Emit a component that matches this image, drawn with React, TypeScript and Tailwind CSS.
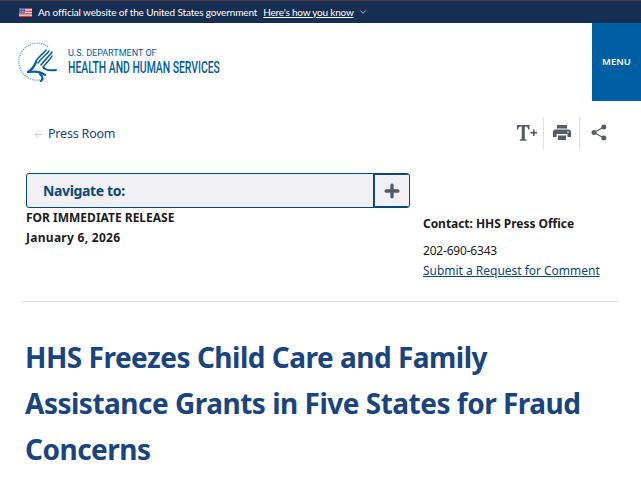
import { ChevronDown, ArrowLeft, Plus } from "lucide-react";

const UsFlag = () => (
  <svg width="13" height="9" viewBox="0 0 13 9" className="shrink-0">
    <rect width="13" height="9" fill="#f4f4f4" />
    <rect y="0" width="13" height="1.3" fill="#d83933" />
    <rect y="2.6" width="13" height="1.3" fill="#d83933" />
    <rect y="5.2" width="13" height="1.3" fill="#d83933" />
    <rect y="7.7" width="13" height="1.3" fill="#d83933" />
    <rect width="6" height="4.8" fill="#5a5fa8" />
    <circle cx="1.5" cy="1.3" r="0.4" fill="#fff" />
    <circle cx="3.2" cy="1.3" r="0.4" fill="#fff" />
    <circle cx="4.8" cy="1.3" r="0.4" fill="#fff" />
    <circle cx="1.5" cy="3.3" r="0.4" fill="#fff" />
    <circle cx="3.2" cy="3.3" r="0.4" fill="#fff" />
    <circle cx="4.8" cy="3.3" r="0.4" fill="#fff" />
  </svg>
);

// hhs eagle with the dotted seal ring round it
const HhsSeal = () => (
  <svg width="40" height="40" viewBox="0 0 40 40" className="shrink-0">
    <path d="M30 4.500 A18.500 18.500 0 1 0 27 36.500" fill="none" stroke="#6fa3cc" strokeWidth="1.400" strokeDasharray="1.200 1" />
    <g fill="none" stroke="#005ea2" strokeLinecap="round">
      <path d="M31 9 C28 13 24 15 20 21" strokeWidth="1.500" />
      <path d="M34 10 C31 15 27 17 23 23" strokeWidth="1.500" />
      <path d="M34 14 C32 18 29 20 26 24" strokeWidth="1.500" />
      <path d="M28 8 C25 12 21 14 18 19" strokeWidth="1.500" />
      <path d="M18 20 C16 25 14 28 10 30" strokeWidth="2.200" />
      <path d="M10 30 C17 29 23 29 27 33" strokeWidth="2.200" />
      <path d="M25 25 C27 28 31 29 38 28" strokeWidth="2" />
      <path d="M22 32 C25 34 25 37 23 39" strokeWidth="2.200" />
    </g>
  </svg>
);

const TextSizeIcon = () => (
  <svg width="22" height="18" viewBox="0 0 22 18" fill="#565c65">
    <path d="M1 1h12.500v4.600h-1.200c-.3-2-.9-3-2.700-3H8.800v11.600c0 1 .5 1.300 1.900 1.400v1.100H3.800v-1.100c1.400-.1 1.900-.4 1.900-1.400V2.600H4.900c-1.800 0-2.400 1-2.700 3H1z" />
    <rect x="14.500" y="8" width="6.500" height="1.600" />
    <rect x="17" y="5.500" width="1.600" height="6.500" />
  </svg>
);

const PrintIcon = () => (
  <svg width="18" height="15" viewBox="0 0 18 15" fill="#565c65">
    <path d="M4 0h10v3.500H4z" />
    <path d="M2.500 4.500h13A2.500 2.500 0 0 1 18 7v5h-3.500V9h-11v3H0V7a2.500 2.500 0 0 1 2.500-2.500z" />
    <path d="M5 10.500h8V15H5z" />
    <circle cx="15" cy="7" r="0.800" fill="#fff" />
  </svg>
);

const ShareIcon = () => (
  <svg width="16" height="17" viewBox="0 0 16 17" fill="#565c65">
    <circle cx="12.800" cy="3" r="2.500" />
    <circle cx="3" cy="8.500" r="2.500" />
    <circle cx="12.800" cy="14" r="2.500" />
    <path d="M3 8.500 12.800 3M3 8.500l9.800 5.500" stroke="#565c65" strokeWidth="1.300" fill="none" />
  </svg>
);

export default function App() {
  return (
    <div className="h-[488px] w-[641px] overflow-hidden bg-white font-['Noto_Sans',sans-serif] text-[#1b1b1b]">
      {/* Gov banner */}
      <div className="flex h-[23px] items-center border-t border-[#4a3b3b] bg-[#162e51] pl-[19px] font-['Lato',sans-serif] text-[10px] text-white">
        <UsFlag />
        <span className="ml-[6px] tracking-[-0.14px]">An official website of the United States government</span>
        <span className="ml-[6px] tracking-[-0.2px] underline">Here's how you know</span>
        <ChevronDown size={10} strokeWidth={1.5} className="ml-[4px]" />
      </div>

      {/* Header */}
      <div className="flex h-[78px] items-start justify-between">
        <div className="flex items-center pl-[18px] pt-[19px]">
          <HhsSeal />
          <div className="ml-[10px] flex flex-col font-['Roboto',sans-serif] text-[#005ea2]">
            <span className="text-[9px] leading-[11px]">U.S. DEPARTMENT OF</span>
            <span className="origin-left scale-x-[0.65] whitespace-nowrap text-[16px] font-medium leading-[17px]">HEALTH AND HUMAN SERVICES</span>
          </div>
        </div>
        <div className="flex h-[78px] w-[49px] items-center justify-center bg-[#005ea2] text-[9.500px] font-semibold text-white">
          MENU
        </div>
      </div>

      {/* Breadcrumb row + tools */}
      <div className="flex h-[72px] items-start justify-between pl-[33px] pr-[34px]">
        <div className="mt-[24px] flex items-center gap-[4px] text-[12.500px] tracking-[-0.2px] text-[#1a4480]">
          <ArrowLeft size={11} strokeWidth={1.25} className="text-[#a9aeb1]" />
          <span>Press Room</span>
        </div>
        <div className="mt-[15px] flex items-center">
          <div className="flex h-[32px] w-[28px] items-center border-r border-[#dfe1e2]">
            <TextSizeIcon />
          </div>
          <div className="flex h-[33px] w-[36px] items-center justify-center border-r border-[#dfe1e2]">
            <PrintIcon />
          </div>
          <div className="flex h-[33px] w-[27px] items-center justify-end">
            <ShareIcon />
          </div>
        </div>
      </div>

      {/* Navigate to */}
      <div className="ml-[26px] flex h-[35px] w-[384px] overflow-hidden rounded-[3px] border border-[#00497f] bg-[#f0f0f5]">
        <div className="flex flex-1 items-center pl-[16px] text-[14px] font-bold tracking-[-0.35px] text-[#0b4778]">Navigate to:</div>
        <div className="flex w-[36px] items-center justify-center border-2 border-[#0b4778] border-y-[1px] border-r-0">
          <Plus size={20} strokeWidth={4} className="text-[#565c65]" />
        </div>
      </div>

      {/* Release info */}
      <div className="mx-[22px] flex h-[94px] justify-between border-b border-[#dfe1e2] pl-[4px] text-[12px]">
        <div className="font-bold">
          <p className="leading-[20px]">FOR IMMEDIATE RELEASE</p>
          <p className="leading-[20px] tracking-[0.28px]">January 6, 2026</p>
        </div>
        <div className="mr-[18px] w-[178px] pt-[6px]">
          <p className="font-bold leading-[20px] tracking-[-0.04px]">Contact: HHS Press Office</p>
          <p className="mt-[7px] leading-[20px] tracking-[-0.2px]">202-690-6343</p>
          <p className="leading-[20px] tracking-[-0.02px] text-[#0b4778] underline">Submit a Request for Comment</p>
        </div>
      </div>

      {/* Title */}
      <h1 className="ml-[25px] mt-[32px] w-[580px] text-[28px] font-bold leading-[46px] tracking-[-0.5px] text-[#1a4480]">
        HHS Freezes Child Care and Family Assistance Grants in Five States for Fraud Concerns
      </h1>
    </div>
  );
}
